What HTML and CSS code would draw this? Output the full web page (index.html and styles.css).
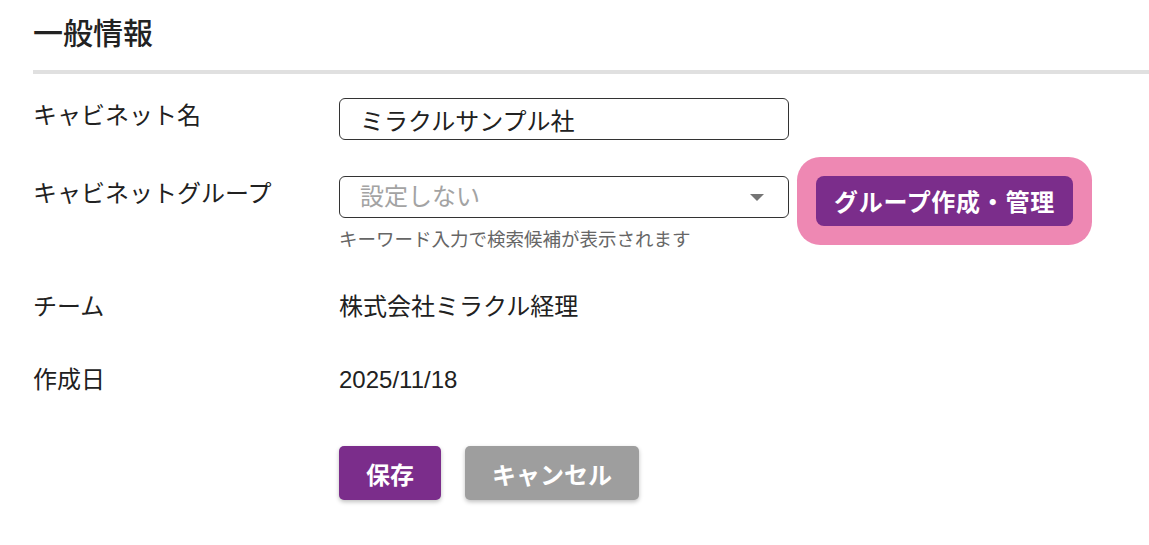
FILE: index.html
```html
<!DOCTYPE html>
<html lang="ja">
<head>
  <meta charset="UTF-8">
  <title>キャビネット設定</title>
  <link rel="stylesheet" href="styles.css">
</head>
<body>

  <div class="panel">
    <h2 class="panel-title">一般情報</h2>
    <div class="divider"></div>

    <div class="row row-name">
      <div class="label">キャビネット名</div>
      <div class="value">
        <input type="text" class="text-input" value="ミラクルサンプル社">
      </div>
    </div>

    <div class="row row-group">
      <div class="label">キャビネットグループ</div>
      <div class="value">
        <div class="group-line">
          <div class="select-box">
            <span class="placeholder">設定しない</span>
            <span class="caret"></span>
          </div>
          <button class="btn btn-purple btn-highlight">グループ作成・管理</button>
        </div>
        <p class="hint">キーワード入力で検索候補が表示されます</p>
      </div>
    </div>

    <div class="row row-team">
      <div class="label">チーム</div>
      <div class="value">株式会社ミラクル経理</div>
    </div>

    <div class="row row-date">
      <div class="label">作成日</div>
      <div class="value">2025/11/18</div>
    </div>

    <div class="actions">
      <button class="btn btn-purple btn-action">保存</button>
      <button class="btn btn-gray btn-action">キャンセル</button>
    </div>
  </div>

</body>
</html>
```

FILE: styles.css
```css
body { margin: 0; background: #fff; color: #212121; font-family: "Liberation Sans", "Noto Sans CJK JP", sans-serif; }
.panel { padding: 13px 0 40px 33px; }
.panel-title { margin: 0; font-size: 30px; line-height: 36px; font-weight: 500; color: #222; font-family: "Noto Sans CJK JP", sans-serif; }
.divider { height: 4px; background: #e0e0e0; margin-top: 21px; margin-bottom: 24px; }

.row { display: flex; font-size: 24px; line-height: 36px; }
.label { width: 306px; flex-shrink: 0; }
.value { flex: 1; }
.row-name { margin-bottom: 36px; }
.row-group { margin-bottom: 37px; }
.row-team { margin-bottom: 37px; }
.row-date { margin-bottom: 48px; }

.text-input { box-sizing: border-box; width: 450px; height: 42px; padding: 0 20px; border: 1px solid #333; border-radius: 6px; font: inherit; font-size: 24px; color: #212121; outline: none; }

.group-line { display: flex; align-items: flex-start; gap: 27px; }
.select-box { box-sizing: border-box; width: 450px; height: 42px; padding: 0 24px 0 20px; border: 1px solid #333; border-radius: 6px; display: flex; align-items: center; justify-content: space-between; }
.placeholder { color: #a3a3a3; }
.caret { width: 0; height: 0; border-left: 7px solid transparent; border-right: 7px solid transparent; border-top: 7px solid #757575; }
.hint { margin: 2px 0 0; font-size: 18.5px; line-height: 24px; color: #666; }

.btn { border: none; cursor: pointer; font-family: "Noto Sans CJK JP", sans-serif; font-weight: bold; font-size: 24px; color: #fff; }
.btn-purple { background: #7b2d8b; }
.btn-gray { background: #9e9e9e; }
.btn-highlight { height: 50px; padding: 0 18px; border-radius: 8px; box-shadow: 0 0 0 19px #ee88b3; line-height: 1; letter-spacing: 0.7px; }

.actions { display: flex; gap: 24px; padding-left: 306px; }
.btn-action { height: 54px; padding: 0 27px; border-radius: 5px; box-shadow: 0 2px 4px rgba(0,0,0,0.25); }
```
